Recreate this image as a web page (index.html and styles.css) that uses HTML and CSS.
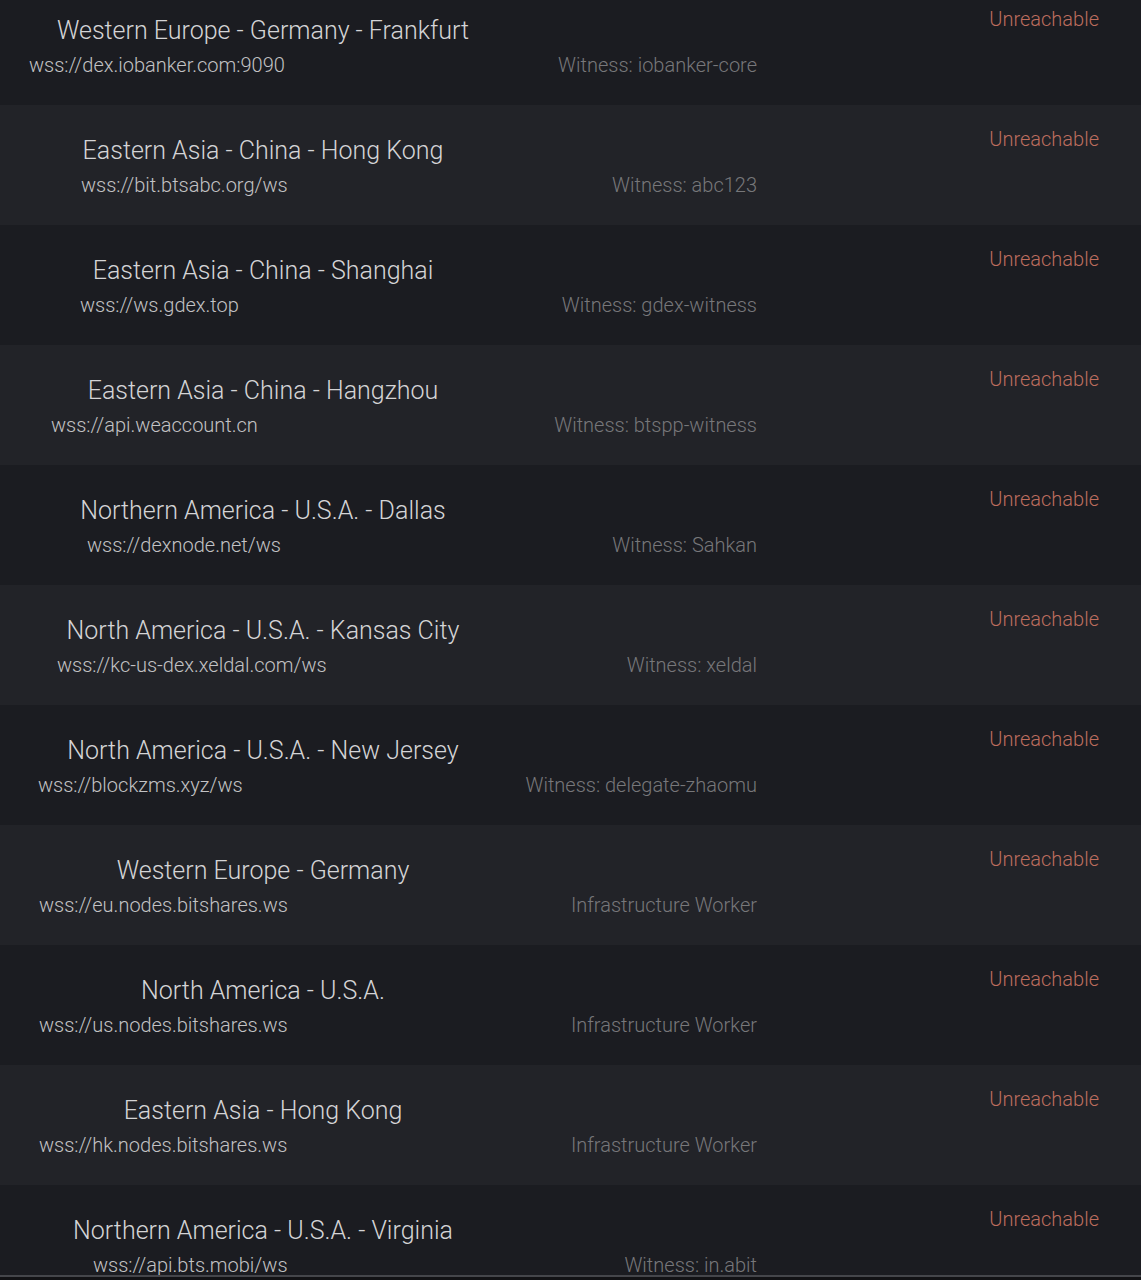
FILE: index.html
```html
<!DOCTYPE html>
<html>
<head>
<meta charset="utf-8">
<link rel="stylesheet" href="styles.css">
</head>
<body>
<div class="list">
  <div class="row r1"><div class="info"><div class="title">Western Europe - Germany - Frankfurt</div><div class="sub"><span class="url">wss://dex.iobanker.com:9090</span><span class="owner">Witness: iobanker-core</span></div></div><div class="status">Unreachable</div></div>
  <div class="row r2"><div class="info"><div class="title">Eastern Asia - China - Hong Kong</div><div class="sub"><span class="url">wss://bit.btsabc.org/ws</span><span class="owner">Witness: abc123</span></div></div><div class="status">Unreachable</div></div>
  <div class="row r3"><div class="info"><div class="title">Eastern Asia - China - Shanghai</div><div class="sub"><span class="url">wss://ws.gdex.top</span><span class="owner">Witness: gdex-witness</span></div></div><div class="status">Unreachable</div></div>
  <div class="row r4"><div class="info"><div class="title">Eastern Asia - China - Hangzhou</div><div class="sub"><span class="url">wss://api.weaccount.cn</span><span class="owner">Witness: btspp-witness</span></div></div><div class="status">Unreachable</div></div>
  <div class="row r5"><div class="info"><div class="title">Northern America - U.S.A. - Dallas</div><div class="sub"><span class="url">wss://dexnode.net/ws</span><span class="owner">Witness: Sahkan</span></div></div><div class="status">Unreachable</div></div>
  <div class="row r6"><div class="info"><div class="title">North America - U.S.A. - Kansas City</div><div class="sub"><span class="url">wss://kc-us-dex.xeldal.com/ws</span><span class="owner">Witness: xeldal</span></div></div><div class="status">Unreachable</div></div>
  <div class="row r7"><div class="info"><div class="title">North America - U.S.A. - New Jersey</div><div class="sub"><span class="url">wss://blockzms.xyz/ws</span><span class="owner">Witness: delegate-zhaomu</span></div></div><div class="status">Unreachable</div></div>
  <div class="row r8"><div class="info"><div class="title">Western Europe - Germany</div><div class="sub"><span class="url">wss://eu.nodes.bitshares.ws</span><span class="owner">Infrastructure Worker</span></div></div><div class="status">Unreachable</div></div>
  <div class="row r9"><div class="info"><div class="title">North America - U.S.A.</div><div class="sub"><span class="url">wss://us.nodes.bitshares.ws</span><span class="owner">Infrastructure Worker</span></div></div><div class="status">Unreachable</div></div>
  <div class="row r10"><div class="info"><div class="title">Eastern Asia - Hong Kong</div><div class="sub"><span class="url">wss://hk.nodes.bitshares.ws</span><span class="owner">Infrastructure Worker</span></div></div><div class="status">Unreachable</div></div>
  <div class="row r11"><div class="info"><div class="title">Northern America - U.S.A. - Virginia</div><div class="sub"><span class="url">wss://api.bts.mobi/ws</span><span class="owner">Witness: in.abit</span></div></div><div class="status">Unreachable</div></div>
</div>
<div class="bottombar"></div>
</body>
</html>
```
FILE: styles.css
```css
html, body {
  margin: 0;
  padding: 0;
  background: #1b1c21;
  height: 1280px;
  overflow: hidden;
  font-family: Roboto, "Liberation Sans", sans-serif;
  font-weight: 300;
}
.list {
  margin-top: -15px;
  height: 1290px;
  overflow: hidden;
}
.row {
  height: 120px;
  display: flex;
  background: #1b1c21;
}
.row:nth-child(even) {
  background: #222328;
}
.info {
  width: 757px;
  display: flex;
  flex-direction: column;
}
.title {
  width: 526px;
  text-align: center;
  font-size: 25px;
  color: #d4d4d6;
  line-height: 30px;
  margin-top: 31px;
}
.sub {
  display: flex;
  justify-content: space-between;
  align-items: baseline;
  margin-top: 7px;
  line-height: 24px;
}
.url {
  font-size: 20px;
  color: #c2c2c4;
}
.owner {
  font-size: 20px;
  color: #77777a;
}
.status {
  flex: 1;
  text-align: right;
  padding-right: 42px;
  padding-top: 21px;
  font-size: 20px;
  line-height: 26px;
  color: #bd6d5e;
}
.r1 .url { padding-left: 29px; }
.r2 .url { padding-left: 81px; }
.r3 .url { padding-left: 80px; }
.r4 .url { padding-left: 51px; }
.r5 .url { padding-left: 87px; }
.r6 .url { padding-left: 57px; }
.r7 .url { padding-left: 38px; }
.r8 .url { padding-left: 39px; }
.r9 .url { padding-left: 39px; }
.r10 .url { padding-left: 39px; }
.r11 .url { padding-left: 93px; }
.bottombar {
  position: fixed;
  left: 0;
  right: 0;
  bottom: 0;
  height: 3px;
  border-top: 2px solid #45464b;
  background: #121215;
}
```
